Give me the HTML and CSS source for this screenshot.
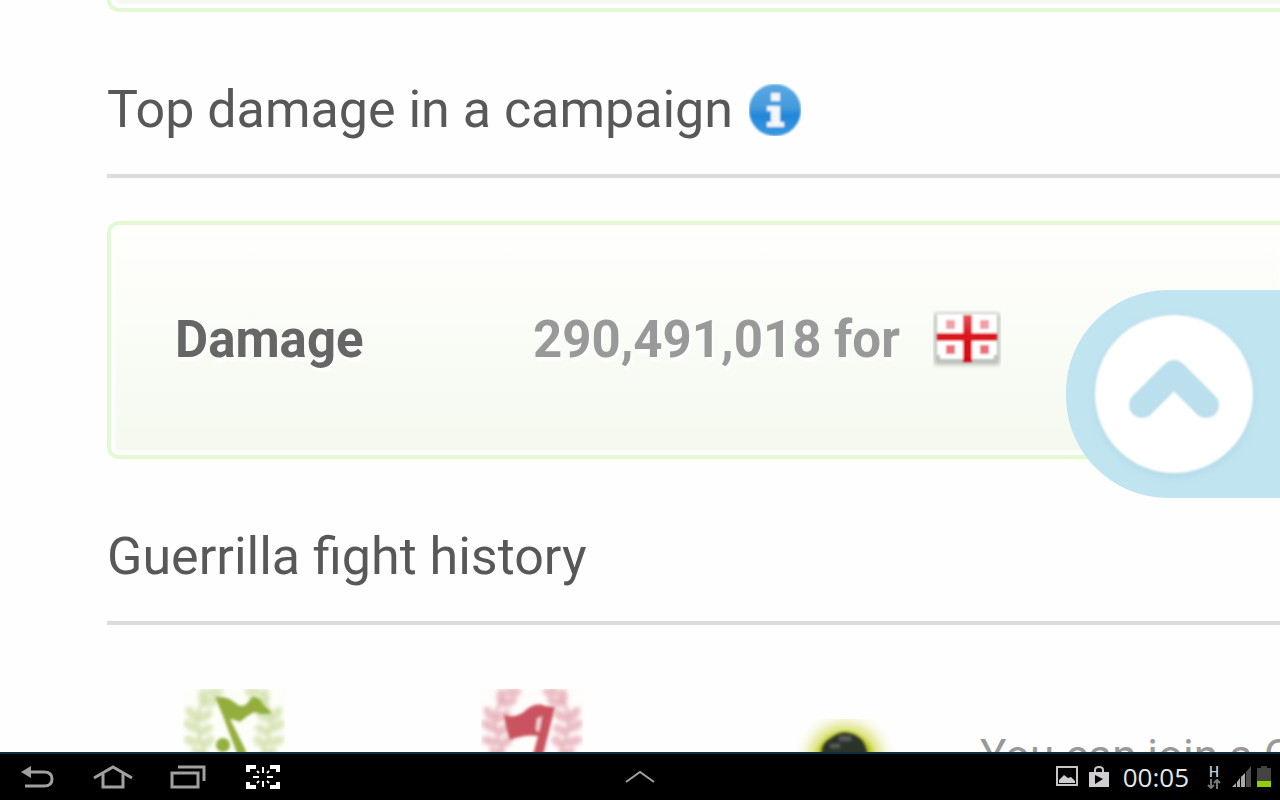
FILE: index.html
```html
<!DOCTYPE html>
<html lang="en">
<head>
<meta charset="utf-8">
<meta name="viewport" content="width=device-width, initial-scale=1">
<title>Top damage in a campaign</title>
<link rel="stylesheet" href="styles.css">
</head>
<body>
<svg width="0" height="0" class="defs" aria-hidden="true">
  <defs>
    <filter id="soft"><feGaussianBlur stdDeviation="1.4"/></filter>
    <filter id="softer"><feGaussianBlur stdDeviation="2.2"/></filter>
    <g id="laurel">
      <ellipse cx="32" cy="3" rx="8" ry="4"/>
      <ellipse cx="20" cy="8" rx="4" ry="8"/>
      <ellipse cx="28" cy="13" rx="8" ry="4" transform="rotate(-25 28 13)"/>
      <ellipse cx="9" cy="25" rx="4" ry="8" transform="rotate(-40 9 25)"/>
      <ellipse cx="22" cy="27" rx="8" ry="4" transform="rotate(-35 22 27)"/>
      <ellipse cx="8" cy="37" rx="8" ry="4" transform="rotate(32 8 37)"/>
      <ellipse cx="22" cy="41" rx="8" ry="4" transform="rotate(-25 22 41)"/>
      <ellipse cx="9" cy="52" rx="8" ry="4" transform="rotate(15 9 52)"/>
      <ellipse cx="25" cy="53" rx="7" ry="4" transform="rotate(-40 25 53)"/>
      <ellipse cx="16" cy="64" rx="8" ry="4" transform="rotate(30 16 64)"/>
      <path d="M24 6Q12 22 15 40T26 70" fill="none" stroke-width="3"/>
    </g>
  </defs>
</svg>
<main class="page">
  <section class="card card-tail"></section>

  <h2 class="heading">Top damage in a campaign
    <svg class="info" viewBox="0 0 52 52" role="img" aria-label="Info">
      <defs><linearGradient id="blue" x2="0" y2="1"><stop offset="0" stop-color="#5aaae2"/><stop offset=".45" stop-color="#459bdc"/><stop offset=".6" stop-color="#2388d8"/><stop offset="1" stop-color="#3b98e0"/></linearGradient>
      <filter id="soft-info"><feGaussianBlur stdDeviation="1.3"/></filter></defs>
      <g filter="url(#soft-info)"><circle cx="26" cy="26" r="26" fill="url(#blue)"/>
      <path fill="#f2f7fc" d="M22 9h9v8h-9zM18 22h13v16h4v5H18v-5h4V27h-4z"/></g>
    </svg>
  </h2>
  <section class="card">
    <dl class="stat">
      <dt>Damage</dt>
      <dd>290,491,018 for
        <svg class="flag" viewBox="0 0 68 60" role="img" aria-label="Georgia">
          <defs><linearGradient id="red" x2="0" y2="1"><stop offset="0" stop-color="#e5505a"/><stop offset=".45" stop-color="#dc1420"/><stop offset="1" stop-color="#da0410"/></linearGradient>
          <filter id="soft-flag"><feGaussianBlur stdDeviation="1"/></filter>
          <filter id="flag-shade"><feGaussianBlur stdDeviation="2"/></filter></defs>
          <rect x="1" y="3" width="66" height="52" rx="3" fill="#aeb2ab" opacity=".8" filter="url(#flag-shade)"/>
          <g filter="url(#soft-flag)">
          <path fill="#fff" d="M4 4h60v41h-3v4H7v-4H4z"/>
          <path fill="#f0a0a7" d="M13 10h9v9h-9zM47 10h9v9h-9z"/><path fill="#e97079" d="M13 35h9v9h-9zM47 35h9v9h-9z"/>
          <path fill="url(#red)" d="M30 5h9v18h25v8H39v21h-9V31H4v-8h26z"/></g>
        </svg>
      </dd>
    </dl>
  </section>

  <h2 class="heading">Guerrilla fight history</h2>
  <section class="history">
    <svg class="medal" viewBox="0 0 102 102" role="img" aria-label="Fights won">
      <rect width="102" height="102" fill="#fdfef9"/>
      <g fill="#dce7bd" stroke="#d2dfac" filter="url(#softer)"><use href="#laurel"/><use href="#laurel" transform="translate(102) scale(-1 1)"/></g>
      <g filter="url(#soft)">
        <path fill="#93ae3d" d="M32 8Q44 6 55 16Q62 20 69 8Q76 7 80 15L89 24Q80 27 72 23Q66 25 57 33Q50 30 47 30L63 62L60 75L54 64L40 27Z"/>
        <circle cx="40" cy="56" r="7" fill="#93b03f"/>
      </g>
    </svg>
    <svg class="medal" viewBox="0 0 102 102" role="img" aria-label="Fights lost">
      <rect width="102" height="102" fill="#fffcfc"/>
      <g fill="#ebc0c6" stroke="#e5b0b8" filter="url(#softer)"><use href="#laurel"/><use href="#laurel" transform="translate(102) scale(-1 1)"/></g>
      <g filter="url(#soft)">
        <path fill="#c9535e" d="M23 26Q37 30 46 20Q56 13 64 17L74 18L61 70H51L57 47Q44 45 29 51Q25 40 23 26Z"/>
        <path fill="#f5dcdf" d="M56 30L61 27L58 43L55 41Z"/>
      </g>
    </svg>
    <svg class="fighter" viewBox="0 0 115 115" role="img" aria-label="Guerrilla fighter">
      <defs><radialGradient id="glow"><stop offset="0" stop-color="#b5be00"/><stop offset=".5" stop-color="#c0ca30"/><stop offset=".6" stop-color="#e0e68c"/><stop offset=".75" stop-color="#f3f5d2"/><stop offset="1" stop-color="#fff" stop-opacity="0"/></radialGradient></defs>
      <circle cx="57" cy="42" r="54" fill="url(#glow)"/>
      <g filter="url(#soft)"><path fill="#2c3029" d="M33 36Q33 24 43 19Q55 9 69 17Q79 23 80 38L84 70H30Z"/><path fill="#585c55" d="M51 17h12v5H51zM42 25h10v4H42z"/></g>
    </svg>
    <p class="note">You can join a Guerrilla fight</p>
  </section>

  <button class="to-top" aria-label="Back to top">
    <svg viewBox="0 0 180 180" aria-hidden="true">
      <defs><filter id="ring" x="-10%" y="-10%" width="120%" height="120%"><feGaussianBlur stdDeviation="4"/></filter>
      <filter id="soft-top"><feGaussianBlur stdDeviation="1"/></filter></defs>
      <circle cx="90" cy="93" r="79" fill="#b1d8e6" filter="url(#ring)"/>
      <g filter="url(#soft-top)"><circle cx="90" cy="90" r="79" fill="#fff"/>
      <path d="M58 101L90 69L122 101" fill="none" stroke="#bbdfec" stroke-width="26" stroke-linecap="round" stroke-linejoin="round"/></g>
    </svg>
  </button>
</main>

<nav class="system-bar">
  <div class="keys">
    <button aria-label="Back"><svg width="36" height="28" viewBox="0 0 36 28"><path d="M9 9H24Q32 9 32 16T24 23H5" fill="none" stroke="#a0a0a0" stroke-width="3"/><path d="M1 9L11 3V15Z" fill="#a0a0a0"/></svg></button>
    <button aria-label="Home"><svg width="40" height="28" viewBox="0 0 40 28"><path d="M1 15L20 4L39 15" fill="none" stroke="#a0a0a0" stroke-width="3"/><path d="M10 11V24H30V11" fill="none" stroke="#a0a0a0" stroke-width="3"/></svg></button>
    <button aria-label="Recent apps"><svg width="36" height="28" viewBox="0 0 36 28"><path d="M2 10H28V24H2ZM8 4H34V18" fill="none" stroke="#a0a0a0" stroke-width="3"/></svg></button>
    <button aria-label="Screenshot"><svg width="34" height="28" viewBox="0 0 34 28"><path d="M2 9V4H10M24 4H32V9M32 19V24H24M10 24H2V19" fill="none" stroke="#fff" stroke-width="4"/><path d="M17 4V10M17 18V24M7 14H13M21 14H27M11 8L13 10M23 8L21 10M11 20L13 18M23 20L21 18" stroke="#fff" stroke-width="2"/></svg></button>
  </div>
  <button aria-label="Expand"><svg width="30" height="14" viewBox="0 0 30 14"><path d="M1 12L15 2L29 12" fill="none" stroke="#a0a0a0" stroke-width="2"/></svg></button>
  <div class="status">
    <div class="alerts">
      <svg width="22" height="20" viewBox="0 0 22 20"><path d="M1 1H21V19H1Z" fill="none" stroke="#c7c5c9" stroke-width="2"/><path fill="#d0cdd2" d="M3 17V14L8 9L12 12L15 11L19 15V17Z"/></svg>
      <svg width="20" height="22" viewBox="0 0 20 22"><path d="M6 7V4Q6 1 10 1T14 4V7" fill="none" stroke="#c7c5c9" stroke-width="2"/><path fill="#d0cdd2" fill-rule="evenodd" d="M0 6H20V21H0ZM6 9V18L14 13Z"/></svg>
    </div>
    <time class="clock">00:05</time>
    <div class="network"><span>H</span><svg width="14" height="10" viewBox="0 0 14 10"><path d="M4 0V8M1 6L4 9L7 6M10 10V2M7 4L10 1L13 4" fill="none" stroke="#777" stroke-width="2"/></svg></div>
    <div class="power">
      <svg width="19" height="22" viewBox="0 0 19 22"><path fill="#aaa" d="M0 21L4 17V21ZM5 16L8 12V21H5ZM9 11L13 7V21H9Z"/><path fill="#4b4b4b" d="M14 6L19 0V21H14Z"/></svg>
      <svg width="14" height="22" viewBox="0 0 14 22"><path fill="#434343" d="M0 2H4V0H10V2H14V15H0Z"/><path fill="#93cc00" d="M0 15H14V21H0Z"/></svg>
    </div>
  </div>
</nav>
</body>
</html>
```
FILE: styles.css
```css
* { box-sizing: border-box; }

body {
  margin: 0;
  height: 100vh;
  display: flex;
  flex-direction: column;
  background: #fefefe;
  color: #585858;
  font-family: Roboto, "Liberation Sans", sans-serif;
}

button {
  padding: 0;
  border: 0;
  background: none;
  display: flex;
  justify-content: center;
}

svg { display: block; flex: none; }
.defs { position: absolute; }

.page {
  flex: 1;
  min-height: 0;
  overflow: hidden;
  position: relative;
  padding-left: 107px;
}

.card {
  margin-top: 43px;
  padding: 80px 64px;
  border: 4px solid #e2f9d2;
  border-right: 0;
  border-radius: 12px 0 0 12px;
  background: linear-gradient(#fffffd, #f4f9ef);
  box-shadow: inset 4px 0 3px #fff, inset 0 -4px 3px #fff, inset 0 4px 3px #fff;
}

.card-tail {
  margin-top: 0;
  padding: 4px;
  border-top: 0;
  border-radius: 0 0 0 12px;
  background: #f4f9ef;
  box-shadow: inset 4px -4px 3px #fff;
}

.heading {
  display: flex;
  align-items: center;
  gap: 16px;
  margin: 68px 0 0;
  padding-bottom: 34px;
  border-bottom: 4px solid #dcdcdc;
  font-size: 52px;
  font-weight: 400;
  line-height: 60px;
  white-space: nowrap;
}

.info { width: 52px; height: 52px; }

.stat {
  display: grid;
  grid-template-columns: 358px 1fr;
  align-items: center;
  margin: 0;
  font-size: 51px;
  font-weight: 700;
  line-height: 70px;
  text-shadow: 2px 4px 2px #fff;
  white-space: nowrap;
}

.stat dt { color: #666; }

.stat dd {
  display: flex;
  align-items: center;
  gap: 33px;
  margin: 0;
  color: #999;
}

.flag { width: 68px; height: 60px; }

.history {
  display: grid;
  grid-template-columns: 298px 307px 192px 1fr;
  align-items: start;
  padding: 64px 0 0 76px;
}

.medal { width: 102px; height: 102px; }
.fighter { width: 115px; height: 115px; margin-top: 30px; }

.note {
  margin: 40px 0 0;
  color: #999;
  font-size: 44px;
  line-height: 54px;
  white-space: nowrap;
}

.to-top {
  position: absolute;
  top: 290px;
  right: 0;
  padding: 14px 16px 14px 18px;
  border-radius: 102px 0 0 102px;
  background: #c0e4f0;
}

.to-top svg { width: 180px; height: 180px; }

.system-bar {
  display: grid;
  grid-template-columns: 1fr auto 1fr;
  align-items: center;
  height: 48px;
  border-top: 2px solid #0c2f40;
  background: #000;
}

.keys {
  display: flex;
  gap: 35px;
  padding-left: 18px;
}

.keys button { width: 40px; }

.status {
  display: flex;
  align-items: center;
  justify-content: flex-end;
  padding-right: 9px;
}

.alerts { display: flex; gap: 11px; }

.clock {
  margin: 0 18px 0 14px;
  color: #e6e6e6;
  font-family: "Open Sans", sans-serif;
  font-size: 26px;
  line-height: 30px;
}

.network {
  display: grid;
  justify-items: center;
  margin-right: 11px;
  color: #ccc;
  font-size: 14px;
  font-weight: 500;
  line-height: 14px;
}

.power { display: flex; gap: 6px; }
```
